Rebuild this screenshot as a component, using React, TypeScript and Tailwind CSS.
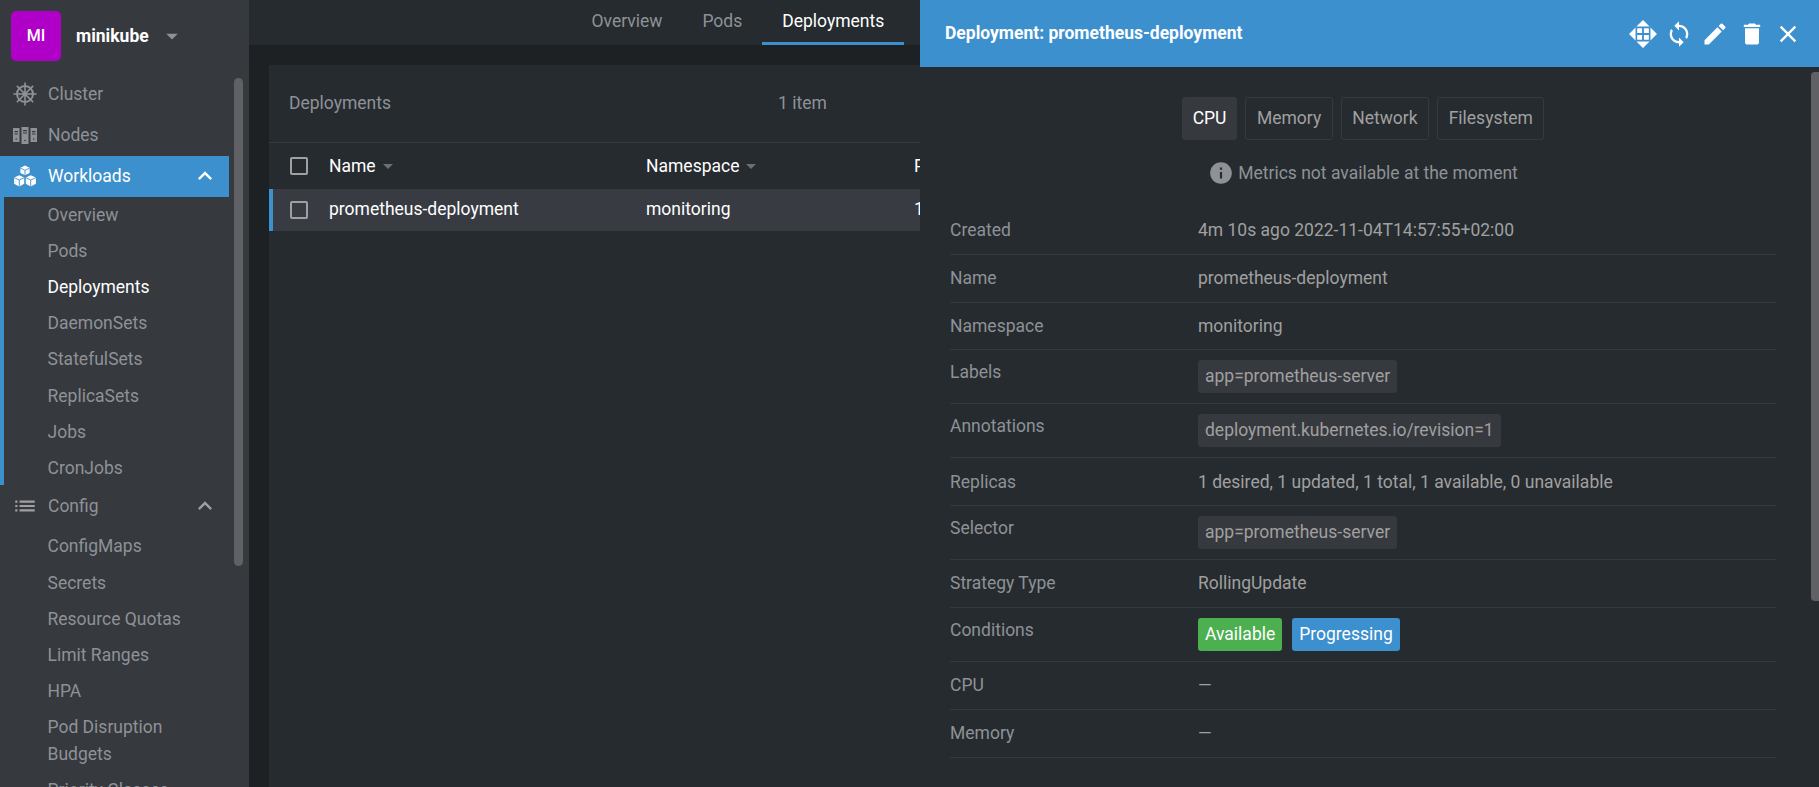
import { MdClose, MdDelete, MdEdit, MdInfo, MdKeyboardArrowUp, MdList, MdSync, MdArrowDropDown } from 'react-icons/md';

const workloadItems = ['Overview', 'Pods', 'Deployments', 'DaemonSets', 'StatefulSets', 'ReplicaSets', 'Jobs', 'CronJobs'];
const configItems = ['ConfigMaps', 'Secrets', 'Resource Quotas', 'Limit Ranges', 'HPA'];

function ClusterIcon() {
  const spokes = [0, 45, 90, 135, 180, 225, 270, 315];
  return (
    <svg viewBox="0 0 26 26" className="w-[26px] h-[26px]" fill="none" stroke="#8e9297">
      <circle cx="13" cy="13" r="8" strokeWidth="2" />
      <circle cx="13" cy="13" r="2.2" fill="#8e9297" strokeWidth="0" />
      {spokes.map((a) => (
        <line key={a} x1="13" y1="13" x2="13" y2="1.5" strokeWidth="1.6" transform={`rotate(${a} 13 13)`} />
      ))}
    </svg>
  );
}

function NodesIcon() {
  return (
    <svg viewBox="0 0 26 20" className="w-[26px] h-[20px]" fill="#8e9297">
      <path d="M1 3h6.5v14H1zM9.5 2h7v17h-7zM18.5 3H25v14h-6.5z" />
      <path d="M2.5 6h3.5v1.2H2.5zM2.5 8.5h3.5v1H2.5zM11 5h4v1.2h-4zM11 7.5h4v1h-4zM20 6h3.5v1.2H20zM20 8.5h3.5v1H20z" fill="#36393e" />
      <circle cx="4.2" cy="14" r="0.8" fill="#36393e" />
      <circle cx="13" cy="15.5" r="0.8" fill="#36393e" />
      <circle cx="21.8" cy="14" r="0.8" fill="#36393e" />
    </svg>
  );
}

function WorkloadsIcon() {
  return (
    <svg viewBox="0 0 24 22" className="w-[24px] h-[22px]" fill="#fff">
      <path d="M12 0.5l4.6 2.2v5.2L12 10.2 7.4 7.9V2.7z" />
      <path d="M6.3 10.2l4.9 2.3v6.3l-4.9 2.6-5.2-2.6v-6.3z" />
      <path d="M17.7 10.2l5.2 2.3v6.3l-5.2 2.6-4.9-2.6v-6.3z" />
      <path d="M7.4 3.1L12 5.4l4.6-2.3M1.1 12.6l5.2 2.5 4.9-2.5M12.8 12.6l4.9 2.5 5.2-2.5M12 5.4v4.8M6.3 15.1v6.3M17.7 15.1v6.3" fill="none" stroke="#3d90ce" strokeWidth="0.9" />
    </svg>
  );
}

function MoveIcon() {
  return (
    <svg viewBox="0 0 24 24" className="w-[28px] h-[28px] translate-x-[1px]" fill="#fff">
      <path d="M12 0L17.6 5.6H6.4zM12 24L6.4 18.4h11.2zM0 12L5.6 6.4v11.2zM24 12L18.4 17.6V6.4z" />
      <path d="M7 7h4.2v4.2H7zM12.8 7H17v4.2h-4.2zM7 12.8h4.2V17H7zM12.8 12.8H17V17h-4.2z" />
    </svg>
  );
}

function Checkbox() {
  return <span className="block w-[18px] h-[18px] shrink-0 rounded-[2px] border-2 border-[#a0a0a0]" />;
}

function SortCaret() {
  return <span className="ml-[7px] w-0 h-0 border-x-[5.5px] border-x-transparent border-t-[5.5px] border-t-[#6b6e73]" />;
}

function NavRow({ label, icon, active, chevron }: { label: string; icon: React.ReactNode; active?: boolean; chevron?: boolean }) {
  return (
    <div className={`h-[41px] flex items-center pr-[10px] ${active ? 'bg-[#3d90ce] text-white' : 'text-[#8e9297]'}`}>
      <span className="w-[48px] flex justify-center pl-[2px] shrink-0">{icon}</span>
      <span className="flex-1">{label}</span>
      {chevron && <MdKeyboardArrowUp className={`w-[28px] h-[28px] ${active ? 'text-white' : 'text-[#a0a0a0]'}`} />}
    </div>
  );
}

function SubRow({ label, current }: { label: string; current?: boolean }) {
  return (
    <div className={`min-h-[36.12px] flex items-center pl-[47.5px] pr-[40px] pt-[5.5px] pb-[3.5px] leading-[27px] ${current ? 'text-white' : 'text-[#8e9297]'}`}>
      {label}
    </div>
  );
}

function Sidebar() {
  return (
    <aside className="relative w-[249px] shrink-0 h-full bg-[#36393e] overflow-hidden">
      <div className="h-[73.5px] flex items-start pt-[11px] pl-[11px]">
        <div className="w-[50px] h-[50px] rounded-[5px] bg-[#b000c8] text-white text-[16px] font-medium flex items-center justify-center">MI</div>
        <span className="ml-[15px] mt-[13px] text-white font-bold">minikube</span>
        <MdArrowDropDown className="ml-[9px] mt-[11px] w-[28px] h-[28px] text-[#8e9297]" />
      </div>
      <div className="w-[229px]">
        <NavRow label="Cluster" icon={<ClusterIcon />} />
        <NavRow label="Nodes" icon={<NodesIcon />} />
        <NavRow label="Workloads" icon={<WorkloadsIcon />} active chevron />
        <div className="border-l-4 border-[#3d90ce]">
          <div className="-ml-[4px]">
            {workloadItems.map((item) => (
              <SubRow key={item} label={item} current={item === 'Deployments'} />
            ))}
          </div>
        </div>
        <NavRow label="Config" icon={<MdList className="w-[26px] h-[26px] text-[#a0a0a0]" />} chevron />
        <div className="pt-[1.5px]">
          {configItems.map((item) => (
            <SubRow key={item} label={item} />
          ))}
          <SubRow label="Pod Disruption Budgets" />
          <SubRow label="Priority Classes" />
        </div>
      </div>
      {/* scrollbar */}
      <div className="absolute left-[234px] top-[78px] w-[9px] h-[488px] rounded-full bg-[#5f6165]" />
    </aside>
  );
}

function MainArea() {
  return (
    <main className="flex-1 min-w-0 h-full bg-[#1e2124] flex flex-col">
      <nav className="h-[45px] shrink-0 bg-[#262b2f] flex pl-[322.5px]">
        {['Overview', 'Pods', 'Deployments'].map((tab) => (
          <div
            key={tab}
            className={`h-[45px] px-[20px] flex items-center ${
              tab === 'Deployments' ? 'text-white border-b-[3px] border-[#3d90ce]' : 'text-[#8e9297] pb-[3px]'
            }`}
          >
            {tab}
          </div>
        ))}
      </nav>
      <section className="flex-1 mt-[20px] ml-[20px] bg-[#262b2f]">
        <div className="h-[78px] flex items-center pl-[20px] text-[#8e9297] border-b border-[#36393e]">
          <span className="w-[489px]">Deployments</span>
          <span>1 item</span>
        </div>
        <div className="h-[46px] flex items-center pl-[21px] text-white">
          <Checkbox />
          <span className="ml-[21px] w-[317px] flex items-center">Name<SortCaret /></span>
          <span className="w-[268px] flex items-center">Namespace<SortCaret /></span>
          <span>Pods</span>
        </div>
        <div className="h-[42px] flex items-center pl-[17px] pb-[1px] text-white bg-[#383c42] border-l-4 border-[#3d90ce]">
          <Checkbox />
          <span className="ml-[21px] w-[317px]">prometheus-deployment</span>
          <span className="w-[268px]">monitoring</span>
          <span>1/1</span>
        </div>
      </section>
    </main>
  );
}

function Badge({ children, className }: { children: React.ReactNode; className: string }) {
  return <span className={`inline-block h-[33px] leading-[33px] px-[7px] rounded-[3px] ${className}`}>{children}</span>;
}

function DetailRow({ label, children, tall }: { label: string; children: React.ReactNode; tall?: boolean }) {
  return (
    <div className={`flex border-b border-[#36393e] ${tall ? 'h-[54px] pt-[10px]' : 'h-[47.8px] items-center'}`}>
      <span className={`w-[248px] shrink-0 text-[#8e9297] ${tall ? 'leading-[24px]' : ''}`}>{label}</span>
      <div className="flex gap-[10px]">{children}</div>
    </div>
  );
}

function Drawer() {
  const grayBadge = 'bg-[#36393e] text-[#a0a0a0]';
  return (
    <div className="absolute top-0 right-0 w-[899px] h-full bg-[#262b2f] flex flex-col">
      <header className="h-[67px] shrink-0 bg-[#3d90ce] flex items-center pl-[25px] pr-[17px] text-white">
        <span className="flex-1 font-bold">Deployment: prometheus-deployment</span>
        <div className="flex items-center gap-[8.5px]">
          <MoveIcon />
          <MdSync className="w-[28px] h-[28px]" />
          <MdEdit className="w-[28px] h-[28px]" />
          <MdDelete className="w-[28px] h-[28px]" />
          <MdClose className="w-[28px] h-[28px]" />
        </div>
      </header>
      <div className="relative flex-1 overflow-hidden pl-[30px] pr-[43px]">
        <div className="flex justify-center gap-[8px] pt-[30px]">
          <div className="h-[43px] px-[11px] flex items-center rounded-[3px] bg-[#36393e] text-white">CPU</div>
          {['Memory', 'Network', 'Filesystem'].map((t) => (
            <div key={t} className="h-[43px] px-[10.5px] flex items-center rounded-[3px] border border-[#36393e] text-[#a0a0a0]">{t}</div>
          ))}
        </div>
        <div className="flex items-center justify-center mt-[19px] h-[28px] text-[#8e9297]">
          <MdInfo className="w-[26px] h-[26px] mr-[4px]" />
          <span>Metrics not available at the moment</span>
        </div>
        <div className="mt-[20px] text-[#a0a0a0]">
          <DetailRow label="Created"><span>4m 10s ago 2022-11-04T14:57:55+02:00</span></DetailRow>
          <DetailRow label="Name"><span>prometheus-deployment</span></DetailRow>
          <DetailRow label="Namespace"><span>monitoring</span></DetailRow>
          <DetailRow label="Labels" tall><Badge className={grayBadge}>app=prometheus-server</Badge></DetailRow>
          <DetailRow label="Annotations" tall><Badge className={grayBadge}>deployment.kubernetes.io/revision=1</Badge></DetailRow>
          <DetailRow label="Replicas"><span>1 desired, 1 updated, 1 total, 1 available, 0 unavailable</span></DetailRow>
          <DetailRow label="Selector" tall><Badge className={grayBadge}>app=prometheus-server</Badge></DetailRow>
          <DetailRow label="Strategy Type"><span>RollingUpdate</span></DetailRow>
          <DetailRow label="Conditions" tall>
            <Badge className="bg-[#4caf50] text-white">Available</Badge>
            <Badge className="bg-[#3d90ce] text-white">Progressing</Badge>
          </DetailRow>
          <DetailRow label="CPU"><span>—</span></DetailRow>
          <DetailRow label="Memory"><span>—</span></DetailRow>
        </div>
        {/* scrollbar */}
        <div className="absolute right-0 top-[5px] w-[8px] h-[529px] rounded-l-[4px] bg-[#5f6165]" />
      </div>
    </div>
  );
}

export default function App() {
  return (
    <div className="relative w-[1819px] h-[787px] overflow-hidden flex text-[17.5px] leading-[1.4] font-['Roboto',sans-serif]">
      <Sidebar />
      <MainArea />
      <Drawer />
    </div>
  );
}
